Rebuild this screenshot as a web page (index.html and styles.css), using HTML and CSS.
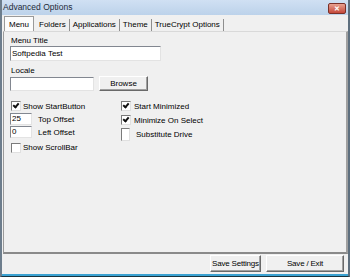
FILE: index.html
```html
<!DOCTYPE html>
<html lang="en">
<head>
  <meta charset="UTF-8" />
  <title>Advanced Options</title>
  <link rel="stylesheet" href="styles.css">
</head>
<body>
  <div class="window">
    <div class="titlebar">
      <span class="title">Advanced Options</span>
      <span class="close">&#x2715;</span>
    </div>
    <div class="client">
      <div class="tabs">
        <span class="tab active">Menu</span>
        <span class="tab">Folders</span>
        <span class="tab">Applications</span>
        <span class="tab">Theme</span>
        <span class="tab">TrueCrypt Options</span>
      </div>
      <div class="panel">
        <div class="label">Menu Title</div>
        <div class="text wide">Softpedia Test</div>
        <div class="label locale-label">Locale</div>
        <div class="row">
          <div class="text locale"></div>
          <span class="btn browse">Browse</span>
        </div>
        <div class="cols">
          <div class="col">
            <div class="check"><span class="box on"></span>Show StartButton</div>
            <div class="num"><span class="text small">25</span>Top Offset</div>
            <div class="num"><span class="text small">0</span>Left Offset</div>
            <div class="check last"><span class="box"></span>Show ScrollBar</div>
          </div>
          <div class="col right">
            <div class="check"><span class="box on"></span>Start Minimized</div>
            <div class="check"><span class="box on"></span>Minimize On Select</div>
            <div class="check"><span class="box tall"></span>Substitute Drive</div>
          </div>
        </div>
      </div>
      <div class="footer">
        <span class="btn save">Save Settings</span>
        <span class="btn exit">Save / Exit</span>
      </div>
    </div>
  </div>
</body>
</html>
```
FILE: styles.css
```css
body {
  margin: 0;
  font-family: "Liberation Sans", Arial, sans-serif;
  font-size: 8px;
  color: #000;
  background: #0c3a4a;
}
.window {
  width: 350px;
  height: 277px;
  box-sizing: border-box;
  border-left: 2px solid #6d7d8c;
  border-right: 2px solid #5e6f7e;
  border-bottom: 1px solid #17343f;
  background: #c4d7ed;
  display: flex;
  flex-direction: column;
}
.titlebar {
  height: 15px;
  flex: none;
  display: flex;
  align-items: flex-start;
  justify-content: space-between;
  background: linear-gradient(#d0e0f3, #bcd2ea);
  padding: 0 2px 0 1px;
}
.title {
  font-size: 8.5px;
  line-height: 14px;
  color: #1e2b3a;
}
.close {
  width: 18px;
  height: 11px;
  margin-top: 3px;
  border: 1px solid #7a3028;
  border-radius: 2px;
  background: linear-gradient(#e9a291, #c5483a);
  color: #fff;
  font-size: 7px;
  font-weight: bold;
  text-align: center;
  line-height: 10px;
  box-sizing: border-box;
}
.client {
  flex: 1;
  background: #f0f0f0;
  display: flex;
  flex-direction: column;
  border-bottom: 2px solid #3ba2d2;
}
.tabs {
  display: flex;
  padding: 1px 0 0 2px;
  height: 15px;
  flex: none;
  align-items: flex-end;
}
.tab {
  padding: 0 3px 1px 3px;
  border-right: 1px solid #8e8e8e;
  line-height: 11px;
  white-space: nowrap;
}
.tab.active {
  background: #fcfcfc;
  border: 1px solid #9a9a9a;
  border-bottom: none;
  padding: 2px 4px 1px 4px;
  margin-right: 2px;
}
.panel {
  flex: 1;
  margin-left: 1px;
  border-top: 1px solid #d9d9d9;
  border-left: 1px solid #9a9a9a;
  border-right: 2px solid #a0a0a0;
  border-bottom: 2px solid #8a8a8a;
  padding: 4px 0 0 6px;
}
.label {
  line-height: 10px;
  padding-left: 1px;
}
.locale-label {
  margin-top: 5px;
}
.text {
  background: #fff;
  border: 1px solid #828790;
  border-right-color: #e3e3e3;
  border-bottom-color: #e3e3e3;
  height: 13px;
  line-height: 13px;
  padding-left: 1px;
}
.wide {
  width: 148px;
}
.row {
  display: flex;
  gap: 5px;
  align-items: flex-start;
}
.locale {
  width: 81px;
  height: 12px;
  margin-top: 1px;
}
.btn {
  display: inline-block;
  text-align: center;
  white-space: nowrap;
  background: #f0f0f0;
  border: 1px solid;
  border-color: #fff #696969 #696969 #fff;
  box-shadow: inset -1px -1px 0 #a0a0a0;
  line-height: 13px;
  height: 13px;
}
.browse {
  width: 47px;
}
.cols {
  display: flex;
  margin-top: 8px;
}
.col {
  display: flex;
  flex-direction: column;
  width: 110px;
}
.check {
  display: flex;
  align-items: center;
  height: 14px;
  gap: 2px;
  padding-left: 1px;
}
.box {
  width: 8px;
  height: 8px;
  border: 1px solid;
  border-color: #7a7a7a #e0e0e0 #e0e0e0 #7a7a7a;
  background: #fff;
  position: relative;
}
.box.on::after {
  content: "";
  position: absolute;
  left: 2px;
  top: 0;
  width: 2px;
  height: 4px;
  border: solid #111;
  border-width: 0 2px 2px 0;
  transform: rotate(40deg);
}
.box.tall {
  width: 7px;
  height: 11px;
  margin: 3px 3px 0 0;
  align-self: flex-start;
}
.right .check {
  gap: 3px;
}
.right .check .tall {
  margin-top: 1px;
}
.num {
  display: flex;
  align-items: center;
  gap: 6px;
  margin-bottom: 1px;
}
.small {
  width: 19px;
  height: 10px;
  line-height: 10px;
}
.last {
  margin-top: 3px;
  height: 11px;
}
.footer {
  height: 19px;
  flex: none;
  display: flex;
  justify-content: flex-end;
  gap: 5px;
  padding: 1px 4px 0 0;
}
.footer .btn {
  height: 15px;
  line-height: 15px;
  letter-spacing: -0.2px;
}
.save {
  width: 49px;
}
.exit {
  width: 76px;
}
```
